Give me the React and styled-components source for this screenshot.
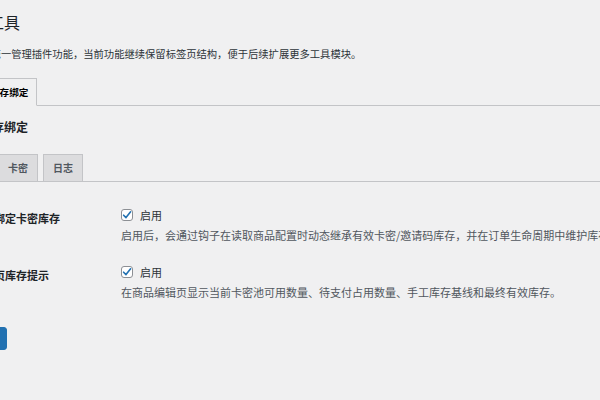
import React, { useState } from "react";
import styled, { createGlobalStyle } from "styled-components";

const GlobalStyle = createGlobalStyle`
  html, body {
    margin: 0;
    padding: 0;
    background: #f0f0f1;
    overflow: hidden;
  }
  body {
    font-family: "Noto Sans CJK SC", "Noto Sans", sans-serif;
    color: #1d2327;
  }
`;

// the page is wider than the window and slightly scrolled, so it starts off to the left
const Wrap = styled.div`
  width: 900px;
  margin-left: -28px;
`;

const Title = styled.h1`
  margin: 0;
  padding-top: 11px;
  font-size: 16px;
  line-height: 22px;
  font-weight: 400;
  color: #1d2327;
`;

const Intro = styled.p`
  margin: 13px 0 0 -2px;
  font-size: 10.3px;
  line-height: 16px;
  color: #2c3338;
`;

const TabBar = styled.div`
  display: flex;
  gap: ${(p) => p.$gap}px;
  margin-top: ${(p) => p.$top}px;
  padding-left: ${(p) => p.$indent}px;
  border-bottom: 1px solid #c3c4c7;
`;

const Tab = styled.button`
  all: unset;
  box-sizing: border-box;
  height: 28px;
  margin-bottom: -1px;
  padding: 0 ${(p) => p.$pad}px;
  border: 1px solid #c3c4c7;
  border-bottom-color: ${(p) => (p.$active ? "#f0f0f1" : "#c3c4c7")};
  background: ${(p) => (p.$active ? "#f0f0f1" : "#dcdcde")};
  color: ${(p) => (p.$active ? "#000" : "#50575e")};
  font-size: ${(p) => p.$size}px;
  font-weight: 600;
  line-height: 26px;
  cursor: pointer;
`;

const Heading = styled.h2`
  margin: 12px 0 0 8px;
  font-size: 12px;
  line-height: 18px;
  font-weight: 600;
  color: #1d2327;
`;

const Table = styled.div`
  margin-top: 13px;
`;

const Row = styled.div`
  display: grid;
  grid-template-columns: 139px 1fr;
`;

const Th = styled.div`
  padding-top: 15px;
  font-size: 11px;
  line-height: 16px;
  font-weight: 600;
  color: #1d2327;
`;

const Td = styled.div`
  padding: 12px 10px 9px;
`;

const CheckLine = styled.label`
  display: flex;
  align-items: center;
  gap: 7px;
  height: 16px;
  font-size: 11px;
  color: #2c3338;
  cursor: pointer;
`;

const Box = styled.span`
  box-sizing: border-box;
  width: 12px;
  height: 12px;
  border: 1px solid #8c8f94;
  border-radius: 3px;
  background: #fff;
  display: flex;
  align-items: center;
  justify-content: center;
`;

const Desc = styled.p`
  margin: 4px 0 0;
  font-size: 11px;
  line-height: 16px;
  color: #50575e;
  white-space: nowrap;
`;

const Submit = styled.button`
  all: unset;
  box-sizing: border-box;
  margin-top: 18px;
  height: 23px;
  padding: 0 7px 0 6px;
  border-radius: 3px;
  background: #2271b1;
  border: 1px solid #2271b1;
  color: #fff;
  font-size: 10px;
  line-height: 21px;
`;

const Check = ({ checked }) => (
  <Box>
    {checked && (
      <svg width="10" height="10" viewBox="0 0 10 10">
        <path d="M1.6 5.2 L4 7.6 L8.6 1.8" fill="none" stroke="#2271b1" strokeWidth="1.6" strokeLinecap="round" strokeLinejoin="round" />
      </svg>
    )}
  </Box>
);

const settings = [
  {
    label: "启用绑定卡密库存",
    desc: "启用后，会通过钩子在读取商品配置时动态继承有效卡密/邀请码库存，并在订单生命周期中维护库存数量。",
  },
  {
    label: "商品页库存提示",
    desc: "在商品编辑页显示当前卡密池可用数量、待支付占用数量、手工库存基线和最终有效库存。",
  },
];

export default function App() {
  const [sub, setSub] = useState(null);
  const [flags, setFlags] = useState([true, true]);

  const toggle = (i) => setFlags(flags.map((f, j) => (j === i ? !f : f)));

  return (
    <>
      <GlobalStyle />
      <Wrap>
        <Title>小工具</Title>
        <Intro>这里统一管理插件功能，当前功能继续保留标签页结构，便于后续扩展更多工具模块。</Intro>

        <TabBar $top={16} $indent={9} $gap={6}>
          <Tab $active $pad={8} $size={9.6}>库存绑定</Tab>
        </TabBar>

        <Heading>库存绑定</Heading>

        <TabBar $top={18} $indent={26} $gap={5}>
          {["卡密", "日志"].map((t) => (
            <Tab key={t} $pad={9} $size={10} $active={sub === t} onClick={() => setSub(t)}>
              {t}
            </Tab>
          ))}
        </TabBar>

        <Table>
          {settings.map((s, i) => (
            <Row key={s.label}>
              <Th>{s.label}</Th>
              <Td>
                <CheckLine onClick={() => toggle(i)}>
                  <Check checked={flags[i]} />
                  启用
                </CheckLine>
                <Desc>{s.desc}</Desc>
              </Td>
            </Row>
          ))}
        </Table>

        <Submit>保存</Submit>
      </Wrap>
    </>
  );
}
